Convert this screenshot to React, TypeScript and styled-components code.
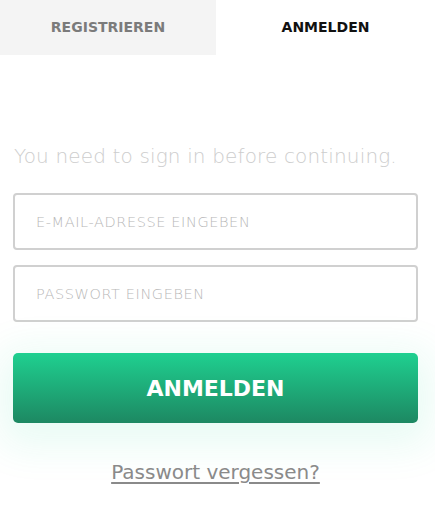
import React from "react";
import styled, { createGlobalStyle } from "styled-components";

const Global = createGlobalStyle`
  html, body { margin: 0; padding: 0; background: #fff; }
  body { font-family: "DejaVu Sans", "Open Sans", sans-serif; }
  * { box-sizing: border-box; }
`;

const Page = styled.div`
  width: 435px;
  min-height: 530px;
  background: #fff;
`;

const Tabs = styled.div`
  display: grid;
  grid-template-columns: 216px 1fr;
  height: 55px;
`;

const Tab = styled.div<{ $active?: boolean }>`
  display: flex;
  align-items: center;
  justify-content: center;
  background: ${(p) => (p.$active ? "#ffffff" : "#f4f4f4")};
  color: ${(p) => (p.$active ? "#111111" : "#7b7b7b")};
  font-size: 14px;
  font-weight: 700;
  padding-bottom: 2px;
`;

const Form = styled.div`
  display: flex;
  flex-direction: column;
  gap: 15px;
  padding: 88px 17px 0 13px;
`;

const Message = styled.p`
  margin: 0 0 9px 1px;
  color: #cdcdcd;
  font-size: 20px;
  font-weight: 200;
  line-height: 26px;
  letter-spacing: 0.15px;
`;

const Input = styled.input`
  height: 57px;
  width: 100%;
  border: 2px solid #d0d0d0;
  border-radius: 4px;
  padding: 0 21px;
  font-family: inherit;
  font-size: 14.5px;
  font-weight: 200;
  letter-spacing: 0.6px;
  color: #333;
  outline: none;
  &::placeholder {
    color: #b8b8b8;
  }
`;

const Button = styled.button`
  margin-top: 16px;
  height: 70px;
  width: 100%;
  border: none;
  border-radius: 5px;
  background: linear-gradient(to bottom, #1fd090 0%, #1d8862 100%);
  color: #fff;
  font-family: inherit;
  font-size: 22px;
  font-weight: 700;
  box-shadow: 0 10px 40px 12px rgba(32, 220, 150, 0.1);
  cursor: pointer;
`;

const LinkRow = styled.div`
  display: flex;
  justify-content: center;
  margin-top: 22px;
`;

const Link = styled.a`
  color: #8a8a8a;
  font-size: 20px;
  text-decoration: underline;
  text-underline-offset: 3px;
  text-decoration-thickness: 2px;
  cursor: pointer;
`;

export default function App() {
  return (
    <Page>
      <Global />
      <Tabs>
        <Tab>REGISTRIEREN</Tab>
        <Tab $active>ANMELDEN</Tab>
      </Tabs>
      <Form>
        <Message>You need to sign in before continuing.</Message>
        <Input type="email" placeholder="E-MAIL-ADRESSE EINGEBEN" />
        <Input type="password" placeholder="PASSWORT EINGEBEN" />
        <Button>ANMELDEN</Button>
        <LinkRow>
          <Link>Passwort vergessen?</Link>
        </LinkRow>
      </Form>
    </Page>
  );
}
